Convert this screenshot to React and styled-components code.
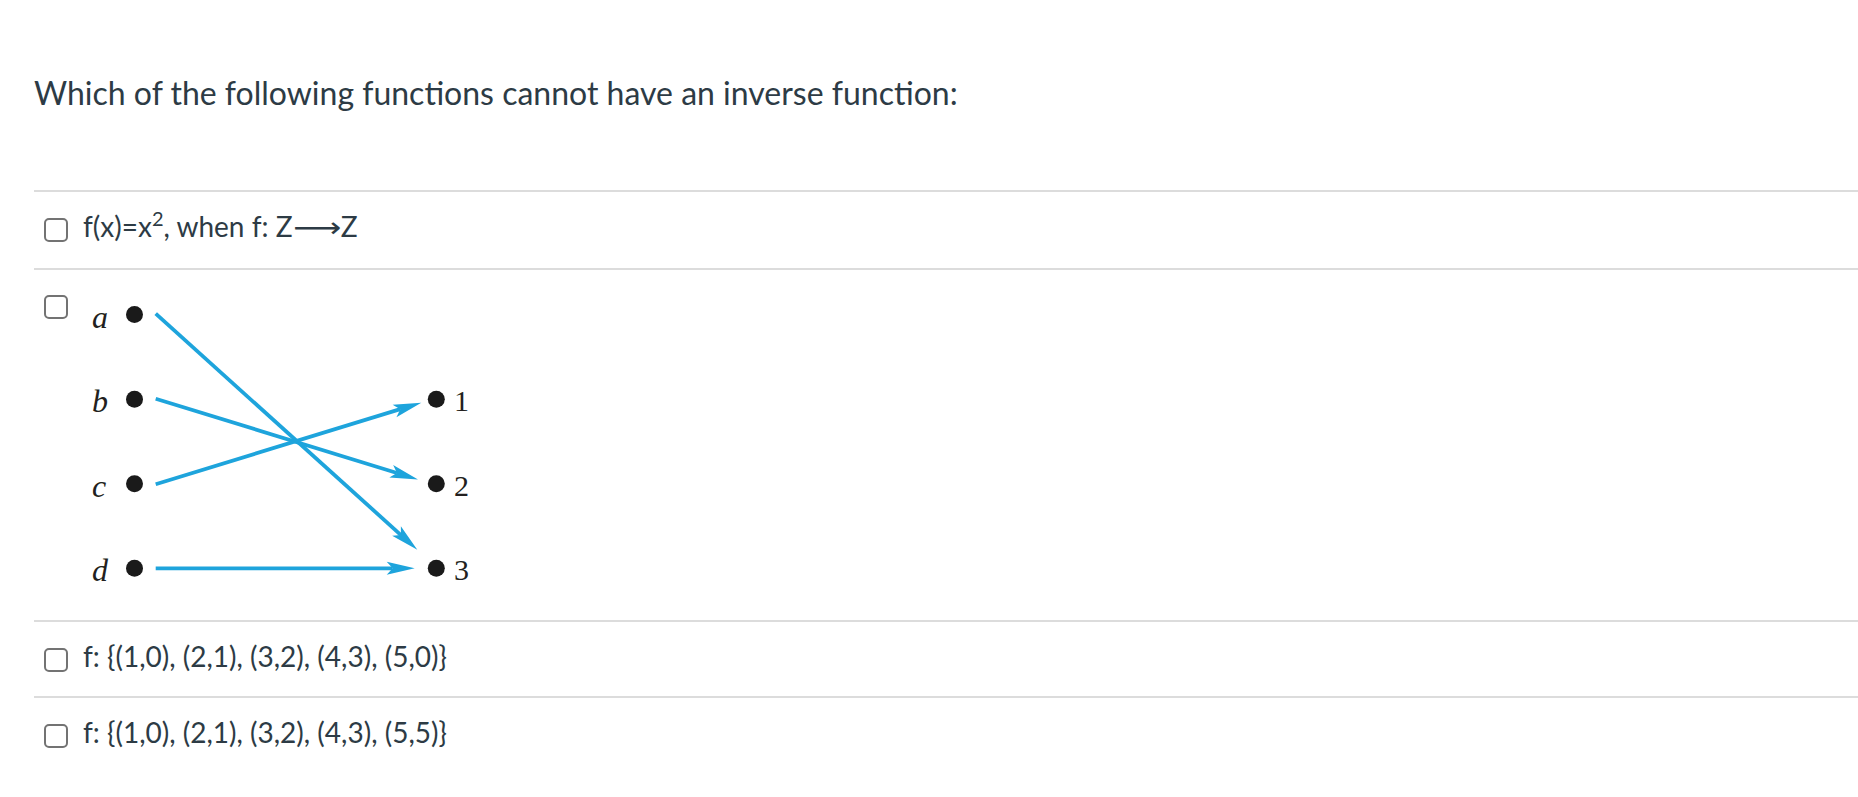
import React from "react";
import styled, { createGlobalStyle } from "styled-components";

const GlobalStyle = createGlobalStyle`
  html, body {
    margin: 0;
    padding: 0;
    background: #ffffff;
  }
  body {
    font-family: Lato, "Noto Sans", "DejaVu Sans", sans-serif;
    color: #2d3b45;
  }
`;

const Page = styled.div`
  padding: 74px 0 0 34px;
`;

const Question = styled.div`
  font-family: Lato, "DejaVu Sans", sans-serif;
  font-size: 32px;
  line-height: 38px;
  color: #2d3b45;
  margin-bottom: 78px;
`;

const Answers = styled.div`
  display: flex;
  flex-direction: column;
`;

const Row = styled.label`
  display: flex;
  align-items: flex-start;
  gap: 15px;
  border-top: 2px solid #dcdcdc;
  padding: ${(p) => (p.$figure ? "17px 0 20px 10px" : "16px 0 22px 10px")};
`;

const Box = styled.span`
  flex: 0 0 auto;
  box-sizing: border-box;
  width: 24px;
  height: 24px;
  margin-top: ${(p) => (p.$figure ? 8 : 10)}px;
  border: 2px solid #737373;
  border-radius: 5px;
  background: #fff;
`;

const Text = styled.span`
  font-family: Lato, "DejaVu Sans", sans-serif;
  font-size: 28px;
  line-height: 36px;
  color: #2d3b45;
  white-space: nowrap;
`;

const Sup = styled.sup`
  font-size: 20px;
  line-height: 0;
  vertical-align: 11px;
`;

const LongArrow = styled.span`
  display: inline-block;
  font-family: "DejaVu Sans", sans-serif;
  font-size: 28px;
  transform: scaleX(1.2);
  transform-origin: left center;
  margin-right: 8px;
`;

const Figure = styled.svg`
  display: block;
`;

const BLUE = "#1ea4dc";

function arrowHead(sx, sy, tx, ty) {
  const dx = tx - sx;
  const dy = ty - sy;
  const len = Math.hypot(dx, dy);
  const ux = dx / len;
  const uy = dy / len;
  const nx = -uy;
  const ny = ux;
  const L = 28;
  const W = 6.5;
  const notch = 22;
  const bx = tx - L * ux;
  const by = ty - L * uy;
  const p1 = `${tx},${ty}`;
  const p2 = `${bx + W * nx},${by + W * ny}`;
  const p3 = `${tx - notch * ux},${ty - notch * uy}`;
  const p4 = `${bx - W * nx},${by - W * ny}`;
  return {
    points: `${p1} ${p2} ${p3} ${p4}`,
    ex: tx - notch * ux,
    ey: ty - notch * uy,
  };
}

const leftY = [27.5, 112.3, 196.7, 281.3];
const rightY = [112.3, 196.7, 281.3];
const labels = ["a", "b", "c", "d"];

const edges = [
  [72.7, 26.7, 334.3, 262.8],
  [72.7, 111.7, 335, 192.5],
  [72.7, 197.3, 338.3, 115.7],
  [72.7, 281.3, 331.7, 281.3],
];

function Diagram() {
  return (
    <Figure width="400" height="313" viewBox="0 0 400 313">
      {leftY.map((y, i) => (
        <g key={labels[i]}>
          <text
            x="9"
            y={y + 13}
            fontFamily="'Liberation Serif', 'DejaVu Serif', serif"
            fontStyle="italic"
            fontSize="32"
            fill="#231f20"
          >
            {labels[i]}
          </text>
          <circle cx="51.5" cy={y} r="8.5" fill="#1a1a1a" />
        </g>
      ))}
      {rightY.map((y, i) => (
        <g key={i}>
          <circle cx="353.3" cy={y} r="8.5" fill="#1a1a1a" />
          <text
            x="371"
            y={y + 12}
            fontFamily="'Liberation Serif', 'DejaVu Serif', serif"
            fontSize="30"
            fill="#231f20"
          >
            {i + 1}
          </text>
        </g>
      ))}
      {edges.map(([sx, sy, tx, ty], i) => {
        const h = arrowHead(sx, sy, tx, ty);
        return (
          <g key={i}>
            <line
              x1={sx}
              y1={sy}
              x2={h.ex}
              y2={h.ey}
              stroke={BLUE}
              strokeWidth="3.8"
            />
            <polygon points={h.points} fill={BLUE} />
          </g>
        );
      })}
    </Figure>
  );
}

export default function App() {
  return (
    <>
      <GlobalStyle />
      <Page>
        <Question>Which of the following functions cannot have an inverse function:</Question>
        <Answers>
          <Row>
            <Box />
            <Text>
              f(x)=x<Sup>2</Sup>, when f: Z<LongArrow>⟶</LongArrow>Z
            </Text>
          </Row>
          <Row $figure>
            <Box $figure />
            <Diagram />
          </Row>
          <Row>
            <Box />
            <Text>f: {"{"}(1,0), (2,1), (3,2), (4,3), (5,0){"}"}</Text>
          </Row>
          <Row>
            <Box />
            <Text>f: {"{"}(1,0), (2,1), (3,2), (4,3), (5,5){"}"}</Text>
          </Row>
        </Answers>
      </Page>
    </>
  );
}
